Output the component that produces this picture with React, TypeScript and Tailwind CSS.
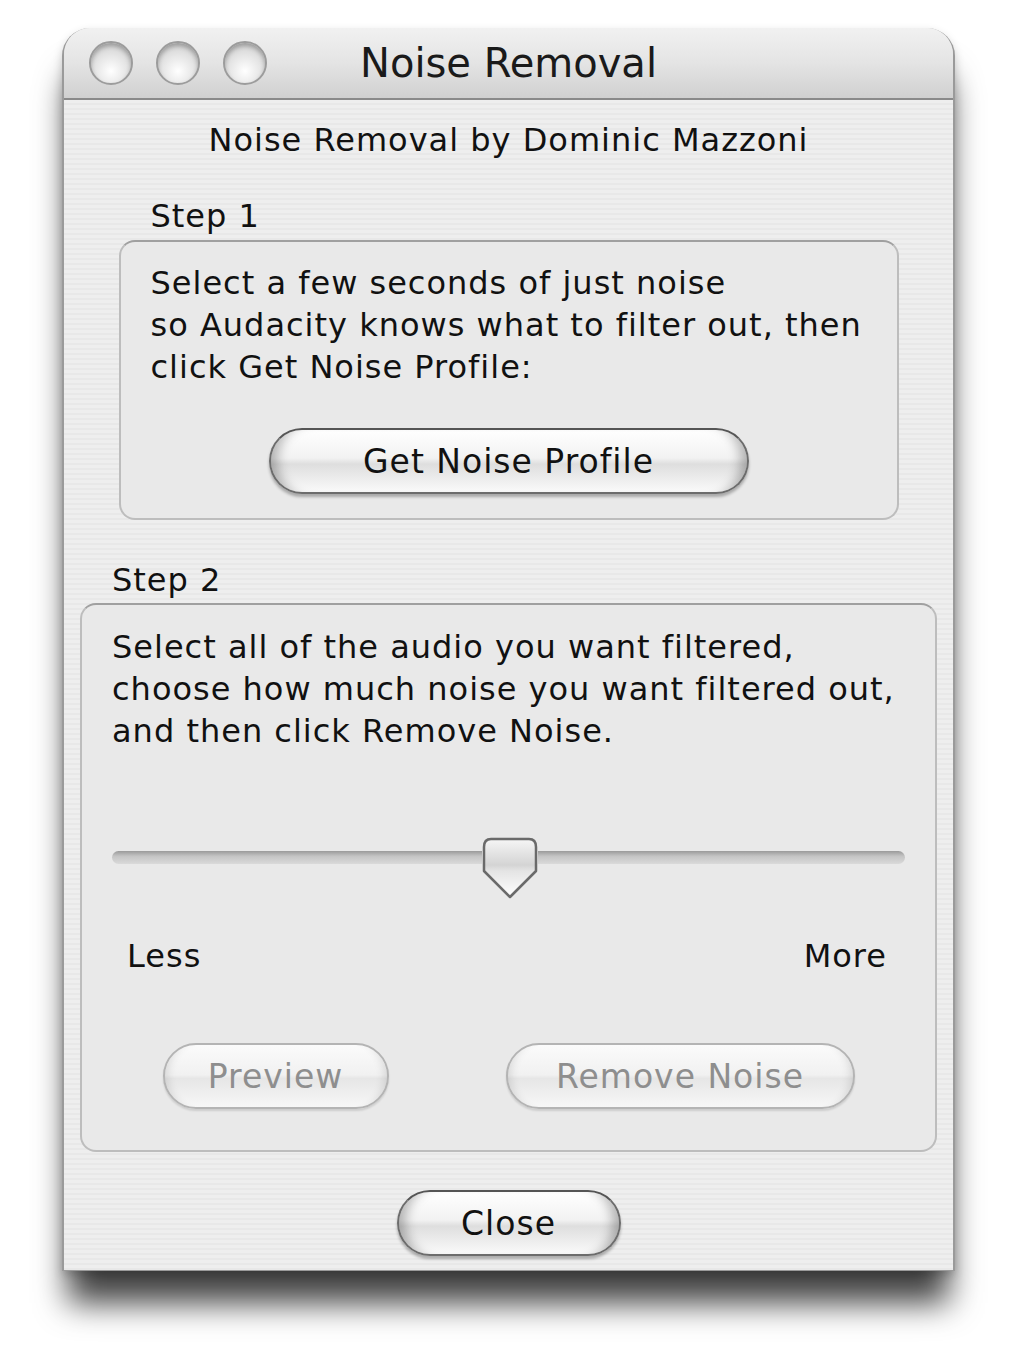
import React from 'react';

const FONT = "font-['DejaVu_Sans','Verdana',sans-serif]";

function AquaButton({
  label,
  width,
  disabled = false,
}: {
  label: string;
  width: string;
  disabled?: boolean;
}) {
  return (
    <button
      type="button"
      className={`${width} h-[66px] shrink-0 rounded-full border-2 ${FONT} text-[33px] leading-none ${
        disabled
          ? 'border-[#b4b4b4] text-[#8e8e8e] bg-[linear-gradient(180deg,#fbfbfb_0%,#f1f1f1_48%,#e6e6e6_54%,#f7f7f7_100%)] shadow-[0_2px_2px_rgba(0,0,0,0.12),inset_12px_0_10px_-10px_rgba(0,0,0,0.12),inset_-12px_0_10px_-10px_rgba(0,0,0,0.12)]'
          : 'border-[#6c6c6c] border-t-[#555] text-[#111] bg-[linear-gradient(180deg,#ffffff_0%,#f2f2f2_45%,#dedede_55%,#fafafa_100%)] shadow-[0_3px_3px_rgba(0,0,0,0.28),inset_16px_0_12px_-10px_rgba(0,0,0,0.28),inset_-16px_0_12px_-10px_rgba(0,0,0,0.28)]'
      }`}
    >
      {label}
    </button>
  );
}

function TrafficLight() {
  return (
    <span className="block h-[44px] w-[44px] rounded-full border-2 border-[#9c9c9c] bg-[radial-gradient(circle_at_50%_70%,#ffffff_0%,#e6e6e6_45%,#c4c4c4_100%)] shadow-[inset_0_3px_4px_rgba(0,0,0,0.25)]" />
  );
}

function SliderThumb() {
  return (
    <svg width="58" height="64" viewBox="0 0 58 64" className="shrink-0">
      <defs>
        <linearGradient id="thumbFill" x1="0" y1="0" x2="0" y2="1">
          <stop offset="0" stopColor="#f6f6f6" />
          <stop offset="0.45" stopColor="#d4d4d4" />
          <stop offset="0.55" stopColor="#e4e4e4" />
          <stop offset="1" stopColor="#ffffff" />
        </linearGradient>
      </defs>
      <path
        d="M10 2 H48 Q55 2 55 10 V34 L29 60 L3 34 V10 Q3 2 10 2 Z"
        fill="url(#thumbFill)"
        stroke="#6a6a6a"
        strokeWidth="2.5"
        strokeLinejoin="round"
      />
    </svg>
  );
}

export default function App() {
  return (
    <div className="min-h-[1351px] w-[1020px] bg-white pl-[62px] pt-[28px]">
      <div
        className={`w-[893px] rounded-t-[28px] border-x-2 border-b border-[#9a9a9a] bg-[#ececec] shadow-[0_38px_32px_-6px_rgba(0,0,0,0.75),0_4px_10px_rgba(0,0,0,0.18)] ${FONT} text-[#111]`}
      >
        {/* title bar */}
        <div className="grid h-[72px] grid-cols-[1fr_auto_1fr] items-center rounded-t-[26px] border-b-2 border-[#8a8a8a] bg-[linear-gradient(180deg,#f1f1f1_0%,#e4e4e4_50%,#d0d0d0_100%)] px-[25px]">
          <div className="flex gap-[23px]">
            <TrafficLight />
            <TrafficLight />
            <TrafficLight />
          </div>
          <div className="text-[40px] leading-none text-[#1a1a1a]">Noise Removal</div>
          <div />
        </div>

        {/* body */}
        <div className="flex flex-col items-center bg-[repeating-linear-gradient(180deg,#eeeeee_0px,#eeeeee_3px,#e8e8e8_3px,#e8e8e8_5px)] pb-[14px] text-[32px] tracking-[1px]">
          <div className="mt-[20px] leading-[40px]">Noise Removal by Dominic Mazzoni</div>

          <div className="mt-[38px] w-[780px] px-[32px] leading-[36px]">Step 1</div>
          <div className="mt-[6px] flex w-[780px] flex-col rounded-[16px] border-2 border-[#bdbdbd] border-t-[#a0a0a0] bg-[#e9e9e9] px-[30px] pb-[24px] pt-[20px]">
            <p className="whitespace-nowrap leading-[42px]">
              Select a few seconds of just noise
              <br />
              so Audacity knows what to filter out, then
              <br />
              click Get Noise Profile:
            </p>
            <div className="mt-[40px] flex justify-center">
              <AquaButton label="Get Noise Profile" width="w-[480px]" />
            </div>
          </div>

          <div className="mt-[42px] w-[857px] px-[32px] leading-[36px]">Step 2</div>
          <div className="mt-[5px] flex w-[857px] flex-col rounded-[16px] border-2 border-[#bdbdbd] border-t-[#a0a0a0] bg-[#e9e9e9] px-[30px] pb-[41px] pt-[21px]">
            <p className="whitespace-nowrap leading-[42px]">
              Select all of the audio you want filtered,
              <br />
              choose how much noise you want filtered out,
              <br />
              and then click Remove Noise.
            </p>

            {/* slider */}
            <div className="mt-[86px] flex h-[64px] items-start">
              <div className="mt-[13px] h-[13px] w-[370px] rounded-l-full bg-[linear-gradient(180deg,#9a9a9a_0%,#c4c4c4_40%,#dadada_100%)]" />
              <div className="-mx-[1px] -mt-[1px]">
                <SliderThumb />
              </div>
              <div className="mt-[13px] h-[13px] flex-1 rounded-r-full bg-[linear-gradient(180deg,#9a9a9a_0%,#c4c4c4_40%,#dadada_100%)]" />
            </div>

            <div className="mt-[34px] flex justify-between px-[15px] pr-[18px] leading-[40px]">
              <span>Less</span>
              <span>More</span>
            </div>

            <div className="mt-[67px] flex justify-center gap-[117px]">
              <AquaButton label="Preview" width="w-[226px]" disabled />
              <AquaButton label="Remove Noise" width="w-[349px]" disabled />
            </div>
          </div>

          <div className="mt-[38px]">
            <AquaButton label="Close" width="w-[224px]" />
          </div>
        </div>
      </div>
    </div>
  );
}
